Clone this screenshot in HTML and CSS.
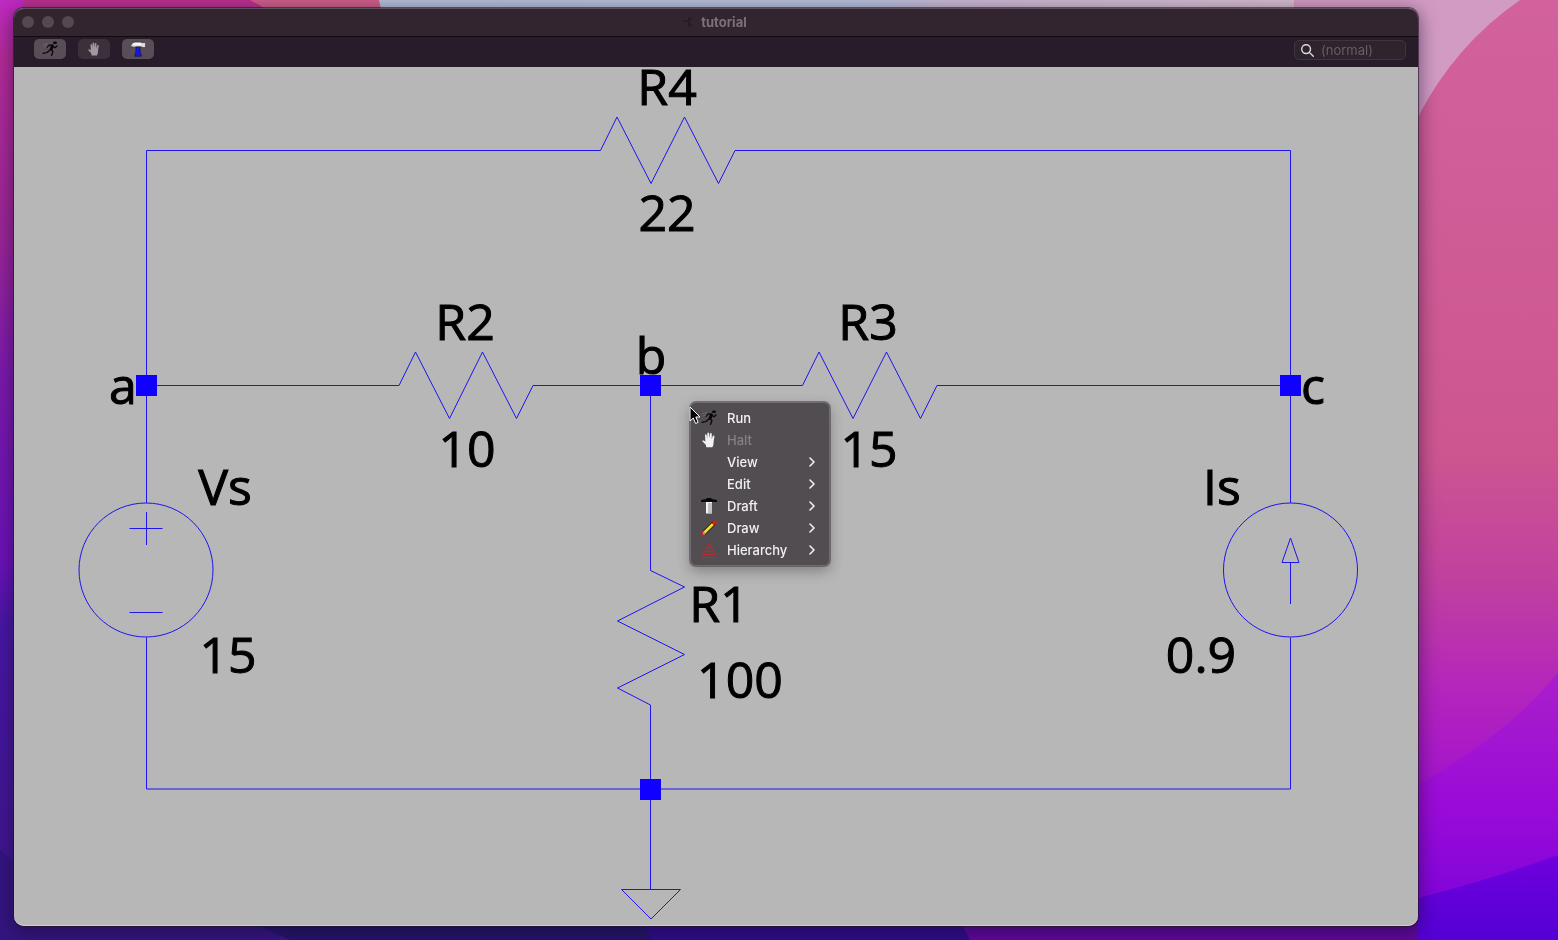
FILE: index.html
```
<!DOCTYPE html>
<html lang="en">
<head>
<meta charset="utf-8">
<title>tutorial</title>
<link rel="stylesheet" href="styles.css">
</head>
<body>
<svg class="wallpaper" viewBox="0 0 1558 940" preserveAspectRatio="none" aria-hidden="true">
  <defs>
    <linearGradient id="left" x2="0" y2="1">
      <stop offset="0" stop-color="#c02ac4"/><stop offset=".06" stop-color="#b52c98"/><stop offset=".25" stop-color="#9c2698"/><stop offset=".4" stop-color="#7c1aae"/><stop offset=".6" stop-color="#6c12b8"/><stop offset=".66" stop-color="#4a16a8"/><stop offset="1" stop-color="#3c1688"/>
    </linearGradient>
    <linearGradient id="pink" x2="0" y2="1">
      <stop offset="0" stop-color="#d2629c"/><stop offset=".48" stop-color="#cd5690"/><stop offset=".62" stop-color="#c0409f"/><stop offset=".73" stop-color="#b426bc"/><stop offset=".86" stop-color="#a00fd0"/><stop offset="1" stop-color="#7a02dc"/>
    </linearGradient>
    <linearGradient id="violet" x2="0" y2="1">
      <stop offset="0" stop-color="#aa1fca"/><stop offset=".5" stop-color="#9a0bd8"/><stop offset="1" stop-color="#7602dc"/>
    </linearGradient>
    <linearGradient id="indigo" x2="0" y2="1"><stop offset="0" stop-color="#7000dc"/><stop offset="1" stop-color="#5400d6"/></linearGradient>
    <linearGradient id="sky"><stop offset="0" stop-color="#b5bfd8"/><stop offset=".55" stop-color="#b8c0da"/><stop offset=".62" stop-color="#cbb9d2"/><stop offset="1" stop-color="#d6bdcf"/></linearGradient>
  </defs>
  <path fill="url(#left)" d="M0 0H700V940H0z"/>
  <path fill="#bd318f" d="M24 0H270V20H20z"/>
  <path fill="#d05f8b" d="M250 0H380L390 20H285z"/>
  <path fill="url(#sky)" d="M379 0H1300V60H392z"/>
  <path fill="#d29bc4" d="M1294 0H1558V200H1290z"/>
  <path fill="#341580" d="M0 850 60 900 280 925V940H0z"/>
  <path fill="#24156a" d="M200 900H640L660 940H290z"/>
  <path fill="#300c8c" d="M630 900H955L972 940H652z"/>
  <path fill="#60089e" d="M950 900H1430V940H970z"/>
  <path fill="url(#pink)" d="M1418 117Q1455 45 1520 0H1558V940H1418z"/>
  <path fill="url(#violet)" d="M1558 672Q1510 733 1418 785V940H1558z"/>
  <path fill="url(#indigo)" d="M1558 855Q1490 880 1418 898V940H1558z"/>
</svg>

<main class="window">
  <header class="titlebar">
    <div class="lights"><button aria-label="Close"></button><button aria-label="Minimize"></button><button aria-label="Zoom"></button></div>
    <h1><svg class="doc-icon" viewBox="0 0 16 16" aria-hidden="true"><path d="M2 7h5M8 3v10M8 7l3-3M8 9l4 4"/></svg>tutorial</h1>
  </header>
  <div class="toolbar">
    <button class="tool" aria-label="Run"><svg viewBox="0 0 16 16"><use href="#runner"/></svg></button>
    <button class="tool off" aria-label="Halt"><svg viewBox="0 0 16 16"><use href="#hand"/></svg></button>
    <button class="tool" aria-label="Draft"><svg viewBox="0 0 16 16">
      <path fill="#1518d8" stroke="#11113c" stroke-width=".6" d="M6 6h4l.3 4.500 1.200 4.800H4.700l1.100-4.800z"/>
      <path fill="#dcdcde" stroke="#3a343c" stroke-width=".7" d="M.4 6Q1 1.500 5 1h5.300q1.700 1.100 2.700.6h2.600v5H13l-2.200-.9H6.200L4 6.300Q2 5.300.4 6z"/>
      <path fill="#fff" d="M3.500 2.300h8v1.400H2.800z"/></svg></button>
    <label class="search"><svg viewBox="0 0 16 16" aria-hidden="true"><circle cx="6.500" cy="6.500" r="4.700"/><path d="m10 10 4.200 4.200"/></svg><input type="text" aria-label="Mode" placeholder="(normal)"></label>
  </div>

  <section class="canvas">
    <svg class="schematic" viewBox="14 67 1404 859" role="img" aria-label="Circuit schematic">
      <g class="wire">
        <path d="M146.500 503V150.500H600.500L617 117l34 66.500L684.500 117l34 66.500L735 150.500H1290.500V503"/>
        <path d="M146.500 385.500H399L415.500 352l34 66.500L482.500 352l34 66.500L533 385.500H802.500L819 352l34 66.500L886.500 352l34 66.500L937 385.500H1290.500"/>
        <path d="M650.500 385V570.500L684.500 587 617.500 621 684.500 654.500 617.500 688 650.500 705V889.500"/>
        <path d="M146.500 637.500V789H1290.500V637.500"/>
        <path d="M621.500 889.500h59L651 919z"/>
        <circle cx="146" cy="570" r="67"/><circle cx="1290.500" cy="570" r="67"/>
        <path d="M129.500 528.500h33M146.500 512v33M129.500 612.500h33"/>
        <path d="M1290.500 604v-42M1282 562.500h17L1290.500 538z"/>
      </g>
      <g class="node">
        <rect x="136" y="375" width="21" height="21"/><rect x="640" y="375" width="21" height="21"/><rect x="1280" y="375" width="21" height="21"/><rect x="640" y="779" width="21" height="21"/>
      </g>
      <g class="label">
        <text x="667" y="105">R4</text><text x="667" y="231">22</text>
        <text x="465" y="340">R2</text><text x="467" y="467">10</text>
        <text x="868" y="340">R3</text><text x="869" y="467">15</text>
        <text x="123" y="404">a</text><text x="651" y="374">b</text><text x="1313" y="404">c</text>
        <text x="225" y="505">Vs</text><text x="228" y="673">15</text>
        <text x="1222" y="505">Is</text><text x="1201" y="673">0.9</text>
        <text x="719" y="622">R1</text><text x="740" y="698">100</text>
      </g>
    </svg>

    <div class="menu" role="menu">
      <button role="menuitem"><svg class="icon" viewBox="0 0 16 16"><g id="runner"><path fill="none" stroke="#050505" stroke-width="1.200" stroke-linecap="round" stroke-linejoin="round" d="M8.500 8.500 11 10.500 9.500 14.500M8 9 5 11.500 1 12.300M10.500 4.200 7 4 5 6.500M11 5.500 13 6.800 15 5"/><path fill="#050505" d="m9.500 3.500 2.500.5L10.500 9l-3-.5z"/><ellipse cx="13" cy="1.800" rx="2" ry="1.300" fill="#050505"/><path fill="none" stroke="#77737a" stroke-width=".6" d="M1 4q2-2 4 0M2 6q1-1 3 0M4 2l2 1"/></g></svg><span>Run</span></button>
      <button role="menuitem" disabled><svg class="icon" viewBox="0 0 16 16"><path id="hand" fill="#f3f2f3" d="M5.300 15.300 4.800 12.800 1.500 9.500q-.3-1.300 1-1.100l1.900 1.100-.4-6.600q.7-1.300 1.700 0l.5 3.700.2-5.500q.8-1.200 1.700 0l.3 5.200.7-4.800q.9-1 1.700.1L10.700 7.300l1.200-3.500q1-.7 1.600.2l-.8 5-.3 3.700-1 2.600z"/></svg><span>Halt</span></button>
      <button role="menuitem"><span class="icon"></span><span>View</span><svg class="chevron" viewBox="0 0 8 10"><path d="m2 1 4 4-4 4"/></svg></button>
      <button role="menuitem"><span class="icon"></span><span>Edit</span><svg class="chevron" viewBox="0 0 8 10"><path d="m2 1 4 4-4 4"/></svg></button>
      <button role="menuitem"><svg class="icon" viewBox="0 0 16 16"><path fill="#080808" d="M0 2 5.500 1V0h5v1L16 2v2H0z"/><path fill="#f4f4f4" d="M5 4h6v11.500H5z"/><path fill="none" stroke="#77737a" stroke-width=".8" d="M7 6h4M7 8h4M7 10h4M7 12h4M7 14h4"/></svg><span>Draft</span><svg class="chevron" viewBox="0 0 8 10"><path d="m2 1 4 4-4 4"/></svg></button>
      <button role="menuitem"><svg class="icon" viewBox="0 0 16 16"><path stroke="#171207" stroke-width="4.500" d="M3 13 13 3"/><path stroke="#f0de25" stroke-width="2.800" d="M3 13 12 4"/><path fill="#ee1717" d="M11 3q1-3 3.500-2.500Q16.500 1 15 3.500l-2 1.800zM0 15.500l1.500-4 3 2.500z"/><path fill="#d98472" d="m1.500 11.500 2.200.8.800 1.700-2 1z"/></svg><span>Draw</span><svg class="chevron" viewBox="0 0 8 10"><path d="m2 1 4 4-4 4"/></svg></button>
      <button role="menuitem"><svg class="icon" viewBox="0 0 16 16"><path fill="none" stroke="#c32430" stroke-width="1" d="M8 1 .5 15.500h15zM5.500 5.500h5M3.800 9.500h8.400M2.500 12.500h11M8 2v3.500M6.500 7.500h3"/></svg><span>Hierarchy</span><svg class="chevron" viewBox="0 0 8 10"><path d="m2 1 4 4-4 4"/></svg></button>
    </div>
    <svg class="cursor" viewBox="0 0 12 19" aria-hidden="true"><path d="M1 1v14l3.300-3 2.300 5.500 2.500-1.100L6.800 11H11z"/></svg>
  </section>
</main>
</body>
</html>
```

FILE: styles.css
```
* { box-sizing: border-box; }
body {
  margin: 0;
  min-height: 100vh;
  display: flex;
  padding: 8px 140px 14px 14px;
  background: #4a16a8;
  font-family: Inter, "Liberation Sans", sans-serif;
  font-size: 13px;
  overflow: hidden;
}
button { border: 0; padding: 0; font: inherit; color: inherit; }
.wallpaper { position: fixed; inset: 0; width: 100%; height: 100%; z-index: -1; }
.window {
  flex: 1;
  display: flex;
  flex-direction: column;
  border-radius: 10px;
  background: #b7b7b7;
  box-shadow: 0 0 0 1px rgba(35, 20, 40, .6), 0 4px 18px 2px rgba(20, 10, 40, .5);
}
.titlebar {
  display: grid;
  grid-template-columns: 1fr auto 1fr;
  align-items: center;
  height: 29px;
  padding: 0 8px 2px;
  border-radius: 10px 10px 0 0;
  background: #32252f;
  border-top: 1px solid #5c515c;
  border-bottom: 1px solid #0e0a10;
}
.lights { display: flex; gap: 8px; }
.lights button { width: 12px; height: 12px; border-radius: 50%; background: #544951; }
.titlebar h1 {
  display: flex;
  align-items: center;
  gap: 4px;
  margin: 0;
  padding-right: 4px;
  font-size: 13px;
  line-height: 16px;
  font-weight: 700;
  color: #7b717a;
}
.doc-icon { width: 16px; height: 16px; fill: none; stroke: #1f161f; }
.toolbar {
  display: flex;
  align-items: center;
  gap: 12px;
  height: 30px;
  padding: 0 12px 6px 20px;
  background: #271c29;
}
.tool {
  display: flex;
  align-items: center;
  justify-content: center;
  width: 32px;
  height: 20px;
  border-radius: 5px;
  background: #594e58;
}
.tool svg { width: 16px; height: 16px; }
.tool.off { background: #3b303b; }
.tool.off svg { width: 14px; height: 14px; opacity: .55; }
.search {
  display: flex;
  align-items: center;
  gap: 6px;
  width: 112px;
  height: 20px;
  margin-left: auto;
  margin-top: 2px;
  padding: 0 6px 0 5px;
  border: 1px solid #40353f;
  border-radius: 5px;
  background: #2e242e;
}
.search svg { flex: none; width: 15px; height: 15px; fill: none; stroke: #dfd8e0; stroke-width: 1.5; stroke-linecap: round; }
.search input { width: 100%; min-width: 0; padding: 0; border: 0; outline: 0; background: none; font: inherit; color: #ddd; }
.search input::placeholder { color: #685d66; opacity: 1; }
.canvas { position: relative; flex: 1; display: flex; min-height: 0; border-radius: 0 0 10px 10px; box-shadow: inset 0 -1px #cfcfd0; }
.schematic { flex: 1; width: 100%; min-width: 0; overflow: visible; }
.wire { fill: none; stroke: #1d14f0; stroke-width: 1; }
.node { fill: #1000ff; }
.label { font-family: "Open Sans", "Noto Sans", sans-serif; font-size: 50px; text-anchor: middle; fill: #000; stroke: #000; stroke-width: 1; }
.menu {
  position: absolute;
  left: 676px;
  top: 335px;
  width: 140px;
  padding: 4px 0;
  border: 1px solid #716c73;
  border-radius: 6px;
  background: #514d50;
  color: #f2f0f2;
  box-shadow: 0 0 0 1px rgba(58, 55, 59, .5), 0 5px 14px rgba(0, 0, 0, .3);
}
.menu button {
  display: flex;
  align-items: center;
  gap: 10px;
  width: 100%;
  height: 22px;
  padding: 0 13px 0 10px;
  background: none;
  line-height: 16px;
  font-weight: 500;
  text-align: left;
}
.menu button:disabled { color: #858186; }
.icon { flex: none; width: 16px; height: 16px; }
.chevron { width: 8px; height: 10px; margin-left: auto; fill: none; stroke: #f2f0f2; stroke-width: 1.6; stroke-linecap: round; stroke-linejoin: round; }
.cursor { position: absolute; left: 675px; top: 339px; width: 12px; height: 19px; fill: #000; stroke: #fff; stroke-width: 1; }
```
